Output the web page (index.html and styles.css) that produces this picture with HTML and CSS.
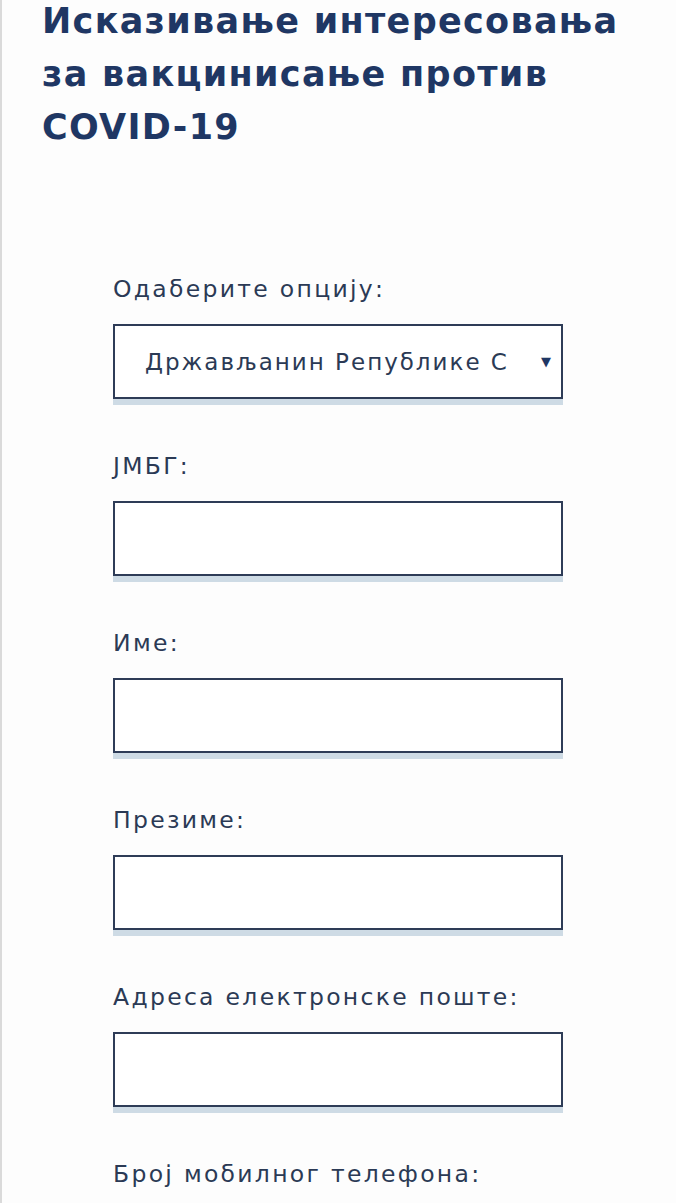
FILE: index.html
```html
<!DOCTYPE html>
<html lang="sr">
<head>
  <meta charset="UTF-8">
  <meta name="viewport" content="width=device-width, initial-scale=1.0">
  <title>Вакцинација</title>
  <link rel="stylesheet" href="styles.css">
</head>
<body>
  <div class="page">
    <!-- Naslov -->
    <h1 class="title">Исказивање интересовања<br>за вакцинисање против<br>COVID-19</h1>

    <!-- Forma -->
    <form class="form">
      <div class="field">
        <label for="opcija">Одаберите опцију:</label>
        <div class="select" id="opcija">
          <span class="select-value">Држављанин Републике С</span>
          <span class="select-arrow">&#9660;</span>
        </div>
      </div>
      <div class="field">
        <label for="jmbg">ЈМБГ:</label>
        <input class="input" id="jmbg" type="text">
      </div>
      <div class="field">
        <label for="ime">Име:</label>
        <input class="input" id="ime" type="text">
      </div>
      <div class="field">
        <label for="prezime">Презиме:</label>
        <input class="input" id="prezime" type="text">
      </div>
      <div class="field">
        <label for="email">Адреса електронске поште:</label>
        <input class="input" id="email" type="text">
      </div>
      <div class="field">
        <label for="telefon">Број мобилног телефона:</label>
        <input class="input" id="telefon" type="text">
      </div>
    </form>
  </div>
</body>
</html>
```

FILE: styles.css
```css
body {
  margin: 0;
  padding: 0;
  background-color: #fdfdfd;
  font-family: "DejaVu Sans", Arial, sans-serif;
  color: #2b3a55;
  overflow: hidden;
}
.page {
  border-left: 2px solid #dadada;
  height: 100vh;
  overflow: hidden;
}
.title {
  margin: -5px 0 0 0;
  padding: 0 0 0 40px;
  font-size: 35px;
  font-weight: 700;
  line-height: 53px;
  letter-spacing: 1.3px;
  color: #1f3764;
}
.form {
  margin-top: 121px;
  padding-left: 111px;
  width: 450px;
}
.field {
  margin-bottom: 53px;
}
.field label {
  display: block;
  font-size: 23.5px;
  line-height: 28px;
  letter-spacing: 2.3px;
  margin-bottom: 21px;
  white-space: nowrap;
}
.input,
.select {
  display: block;
  box-sizing: border-box;
  width: 450px;
  height: 75px;
  margin: 0;
  border: 2px solid #2e3c57;
  background-color: #fff;
  box-shadow: 0 6px 0 #cedbe5;
  font-family: inherit;
}
.select {
  display: flex;
  align-items: center;
  padding: 0 10px 0 30px;
  font-size: 23px;
  letter-spacing: 2px;
  color: #2b3a55;
}
.select-value {
  white-space: nowrap;
}
.select-arrow {
  margin-left: auto;
  font-size: 13px;
  letter-spacing: 0;
  color: #1f3764;
}
```
